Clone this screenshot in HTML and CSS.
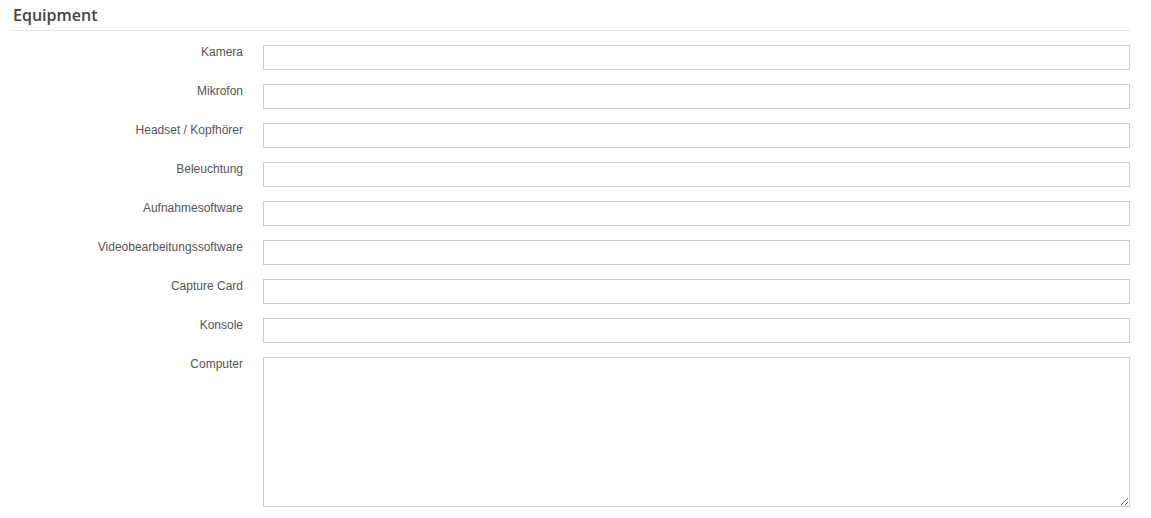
FILE: index.html
```html
<!DOCTYPE html>
<html>
<head>
<meta charset="utf-8">
<link rel="stylesheet" href="styles.css">
</head>
<body>
<div class="panel">
  <h3 class="title">Equipment</h3>
  <form class="form">
    <label class="lbl">Kamera</label><input class="field" type="text">
    <label class="lbl">Mikrofon</label><input class="field" type="text">
    <label class="lbl">Headset / Kopfhörer</label><input class="field" type="text">
    <label class="lbl">Beleuchtung</label><input class="field" type="text">
    <label class="lbl">Aufnahmesoftware</label><input class="field" type="text">
    <label class="lbl">Videobearbeitungssoftware</label><input class="field" type="text">
    <label class="lbl">Capture Card</label><input class="field" type="text">
    <label class="lbl">Konsole</label><input class="field" type="text">
    <label class="lbl">Computer</label><textarea class="area"></textarea>
  </form>
</div>
</body>
</html>
```
FILE: styles.css
```css
html, body {
  margin: 0;
  padding: 0;
  background: #fff;
}
.panel {
  padding-left: 13px;
  width: 1117px;
}
.title {
  margin: 0;
  font-family: "Open Sans", sans-serif;
  font-weight: 600;
  font-size: 16px;
  line-height: 22px;
  color: #444;
  padding-top: 4px;
  padding-bottom: 4px;
  border-bottom: 1px solid #e5e5e5;
}
.form {
  display: grid;
  grid-template-columns: 230px 867px;
  column-gap: 20px;
  row-gap: 14px;
  margin-top: 14px;
}
.lbl {
  font-family: "Liberation Sans", Arial, sans-serif;
  font-size: 12px;
  line-height: 14px;
  color: #555;
  text-align: right;
  align-self: start;
}
.field, .area {
  box-sizing: border-box;
  margin: 0;
  width: 867px;
  border: 1px solid #ccc;
  border-radius: 0;
  background: #fff;
  font-family: "Liberation Sans", Arial, sans-serif;
  font-size: 12px;
  outline: none;
}
.field {
  height: 25px;
  padding: 2px 6px;
}
.area {
  height: 150px;
  padding: 4px 6px;
  resize: vertical;
  display: block;
}
```
